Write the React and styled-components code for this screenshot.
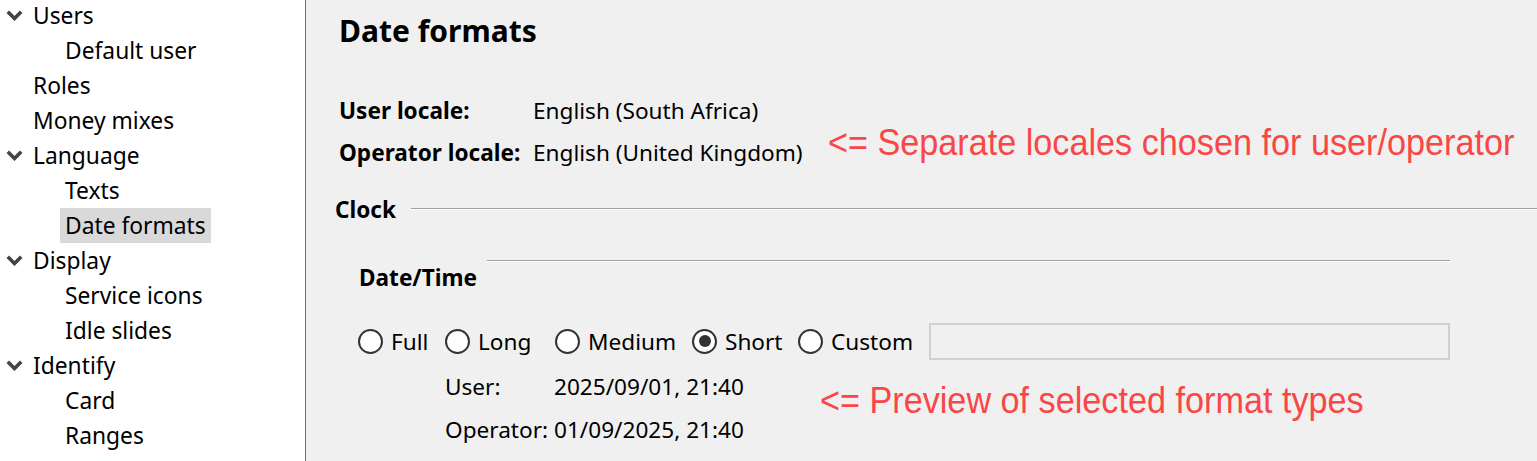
import * as React from "react";
import styled, { createGlobalStyle } from "styled-components";

const GlobalStyle = createGlobalStyle`
  html, body {
    margin: 0;
    padding: 0;
    background: #f0f0f0;
    font-family: "Noto Sans", "Open Sans", sans-serif;
    color: #000;
  }
`;

const Window = styled.div`
  display: flex;
  width: 1537px;
  height: 461px;
  overflow: hidden;
`;

const Sidebar = styled.nav`
  width: 305px;
  flex-shrink: 0;
  background: #fff;
  border-right: 1px solid #6e6e6e;
  overflow: hidden;
`;

const TreeList = styled.ul`
  list-style: none;
  margin: -2px 0 0;
  padding: 0;
`;

const TreeRow = styled.li`
  display: flex;
  align-items: center;
  height: 35px;
  padding-left: ${props => (props.level === 0 ? 28 : 60)}px;
  position: relative;
  font-size: 22.8px;
`;

const Chevron = styled.svg`
  position: absolute;
  left: 6px;
  top: 12px;
  width: 17px;
  height: 11px;
`;

const TreeLabel = styled.span`
  display: inline-flex;
  align-items: center;
  height: 35px;
  padding: 0 5px;
  background: ${props => (props.selected ? "#d9d9d9" : "transparent")};
`;

const Main = styled.main`
  flex: 1;
  min-width: 0;
  overflow: hidden;
  padding-left: 33px;
`;

const Title = styled.h1`
  margin: 0;
  height: 62px;
  line-height: 62px;
  font-size: 30px;
  font-weight: 700;
`;

const LocaleGrid = styled.div`
  display: grid;
  grid-template-columns: 194px 295px minmax(0, 1fr);
  grid-auto-rows: 42px;
  align-items: center;
  margin-top: 27px;
  font-size: 22.6px;
`;

const FieldLabel = styled.span`
  grid-column: 1;
  font-weight: 700;
`;

const FieldValue = styled.span`
  grid-column: 2;
`;

const Annotation = styled.span`
  display: inline-block;
  color: #fa4646;
  font-family: "Liberation Sans", Arial, sans-serif;
  font-size: 36px;
  line-height: 40px;
  white-space: nowrap;
  transform: scaleX(0.95);
  transform-origin: left center;
`;

const LocaleNote = styled(Annotation)`
  grid-column: 3;
  grid-row: 2;
  justify-self: start;
  margin-top: -18px;
`;

const SectionHeader = styled.div`
  display: flex;
  align-items: center;
  gap: 15px;
  height: 36px;
  margin: 18px 0 0 -4px;
  font-size: 22.6px;
  font-weight: 700;
`;

const EtchedLine = styled.div`
  flex: 1;
  height: 0;
  border-top: 1px solid #a0a0a0;
  border-bottom: 1px solid #fff;
`;

const Group = styled.section`
  margin: 23px 87px 0 20px;
`;

const GroupHeader = styled.div`
  display: flex;
  align-items: flex-start;
  gap: 10px;
  font-size: 22.6px;
  font-weight: 700;
`;

const GroupTitle = styled.span`
  margin-top: 10px;
  line-height: 36px;
`;

const GroupLine = styled(EtchedLine)`
  margin-top: 10px;
`;

const RadioRow = styled.div`
  display: flex;
  align-items: center;
  height: 40px;
  margin: 25px 0 0 -1px;
  font-size: 22.6px;
`;

const RadioItem = styled.label`
  display: flex;
  align-items: center;
  gap: 8px;
  width: ${props => props.width}px;
  flex-shrink: 0;
`;

const RadioCircle = styled.span`
  display: flex;
  align-items: center;
  justify-content: center;
  box-sizing: border-box;
  width: 25px;
  height: 25px;
  border: 2px solid #333;
  border-radius: 50%;
  background: #fff;

  &::after {
    content: "";
    width: 12px;
    height: 12px;
    border-radius: 50%;
    background: ${props => (props.checked ? "#333" : "transparent")};
  }
`;

const CustomInput = styled.div`
  flex: 1;
  box-sizing: border-box;
  height: 37px;
  border: 2px solid #cfcfcf;
  background: #f0f0f0;
`;

const PreviewGrid = styled.div`
  display: grid;
  grid-template-columns: 109px 266px minmax(0, 1fr);
  grid-template-rows: 43px 43px;
  align-items: center;
  margin: 4px 0 0 86px;
  font-size: 22.6px;
`;

const PreviewNote = styled(Annotation)`
  grid-column: 3;
  grid-row: 1 / span 2;
  align-self: start;
  justify-self: start;
  margin-top: 16px;
`;

const tree = [
  { label: "Users", level: 0, open: true },
  { label: "Default user", level: 1 },
  { label: "Roles", level: 0 },
  { label: "Money mixes", level: 0 },
  { label: "Language", level: 0, open: true },
  { label: "Texts", level: 1 },
  { label: "Date formats", level: 1, selected: true },
  { label: "Display", level: 0, open: true },
  { label: "Service icons", level: 1 },
  { label: "Idle slides", level: 1 },
  { label: "Identify", level: 0, open: true },
  { label: "Card", level: 1 },
  { label: "Ranges", level: 1 },
];

const formats = [
  { name: "Full", width: 87 },
  { name: "Long", width: 110 },
  { name: "Medium", width: 137 },
  { name: "Short", width: 106 },
  { name: "Custom", width: 131 },
];

export default function App() {
  const [format, setFormat] = React.useState("Short");

  return (
    <React.Fragment>
      <GlobalStyle />
      <Window>
        <Sidebar>
          <TreeList>
            {tree.map(item => (
              <TreeRow key={item.label} level={item.level}>
                {item.open && (
                  <Chevron viewBox="0 0 17 11">
                    <polyline
                      points="1.8,1.8 8.5,8.5 15.2,1.8"
                      fill="none"
                      stroke="#444"
                      strokeWidth="3.6"
                    />
                  </Chevron>
                )}
                <TreeLabel selected={item.selected}>{item.label}</TreeLabel>
              </TreeRow>
            ))}
          </TreeList>
        </Sidebar>
        <Main>
          <Title>Date formats</Title>
          <LocaleGrid>
            <FieldLabel>User locale:</FieldLabel>
            <FieldValue>English (South Africa)</FieldValue>
            <FieldLabel>Operator locale:</FieldLabel>
            <FieldValue>English (United Kingdom)</FieldValue>
            <LocaleNote>&lt;= Separate locales chosen for user/operator</LocaleNote>
          </LocaleGrid>
          <SectionHeader>
            <span>Clock</span>
            <EtchedLine />
          </SectionHeader>
          <Group>
            <GroupHeader>
              <GroupTitle>Date/Time</GroupTitle>
              <GroupLine />
            </GroupHeader>
            <RadioRow>
              {formats.map(f => (
                <RadioItem
                  key={f.name}
                  width={f.width}
                  onClick={() => setFormat(f.name)}
                >
                  <RadioCircle checked={format === f.name} />
                  {f.name}
                </RadioItem>
              ))}
              <CustomInput />
            </RadioRow>
            <PreviewGrid>
              <span>User:</span>
              <span>2025/09/01, 21:40</span>
              <span>Operator:</span>
              <span>01/09/2025, 21:40</span>
              <PreviewNote>&lt;= Preview of selected format types</PreviewNote>
            </PreviewGrid>
          </Group>
        </Main>
      </Window>
    </React.Fragment>
  );
}
